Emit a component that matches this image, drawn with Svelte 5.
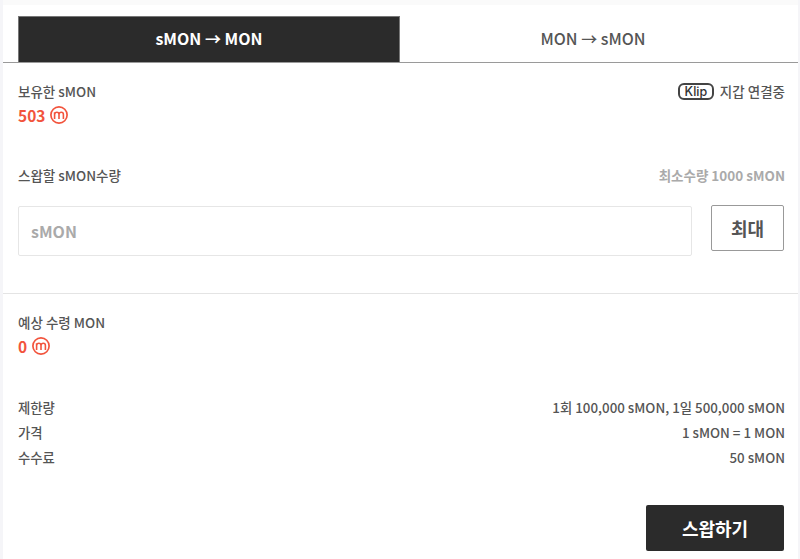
<script>
  const rows = [
    ['제한량', '1회 100,000 sMON, 1일 500,000 sMON'],
    ['가격', '1 sMON = 1 MON'],
    ['수수료', '50 sMON']
  ];
</script>

{#snippet coin()}
  <svg class="coin" width="18" height="18" viewBox="0 0 18 18" aria-hidden="true">
    <circle cx="9" cy="9" r="8.1" fill="none" stroke="#f2543d" stroke-width="1.7" />
    <path d="M4.6 13V6.2M4.6 8.2c.4-1.3 1.2-1.9 2.2-1.9S9 7 9 8.4V13M9 8.4c.2-1.4 1.2-2.1 2.3-2.1s2.1.8 2.1 2.2V13" fill="none" stroke="#f2543d" stroke-width="1.6" />
  </svg>
{/snippet}

<div class="panel">
  <div class="tabs">
    <button class="tab active">sMON → MON</button>
    <button class="tab">MON → sMON</button>
  </div>

  <section class="top">
    <div class="between">
      <div class="label">보유한 sMON</div>
      <div class="wallet">
        <span class="klip">Klip</span>
        <span>지갑 연결중</span>
      </div>
    </div>
    <div class="amount">503 {@render coin()}</div>

    <div class="between swap-row">
      <div class="label">스왑할 sMON수량</div>
      <div class="min">최소수량 1000 sMON</div>
    </div>

    <div class="input-row">
      <input class="input" placeholder="sMON" />
      <button class="max">최대</button>
    </div>
  </section>

  <section class="bottom">
    <div class="label">예상 수령 MON</div>
    <div class="amount">0 {@render coin()}</div>

    <div class="rows">
      {#each rows as [k, v]}
        <div class="between row"><span>{k}</span><span>{v}</span></div>
      {/each}
    </div>

    <div class="actions">
      <button class="submit">스왑하기</button>
    </div>
  </section>
</div>

<style>
  :global(body) {
    margin: 0;
    background: #f5f5f8;
    font-family: "Noto Sans CJK KR", "Noto Sans", sans-serif;
  }
  .panel {
    box-sizing: border-box;
    height: 559px;
    margin: 0 2px 0 3px;
    border-top: 5px solid #fafafa;
    padding-top: 11px;
    background: #fff;
    color: #555;
    overflow: hidden;
  }
  button, input { font-family: inherit; }
  .tabs {
    display: flex;
    padding: 0 12px 0 15px;
    height: 47px;
    box-sizing: border-box;
    border-bottom: 1px solid #9a9a9a;
  }
  .tab {
    flex: 1 1 0;
    border: 0;
    background: none;
    padding: 0 0 3px;
    font-size: 16px;
    font-weight: 500;
    color: #555;
    height: 46px;
  }
  .tab.active {
    flex: 0 0 382px;
    background: #2b2b2b;
    color: #fff;
    font-weight: 700;
    padding: 0 0 3px;
    border: 1px solid #777;
    border-bottom: 0;
    box-sizing: border-box;
  }
  .top {
    padding: 18px 13px 0 15px;
    height: 231px;
    box-sizing: border-box;
    border-bottom: 1px solid #e4e4e4;
  }
  .bottom { padding: 18px 13px 0 15px; }
  .between {
    display: flex;
    justify-content: space-between;
    align-items: center;
  }
  .label {
    font-size: 13.5px;
    line-height: 20px;
    font-weight: 500;
    color: #555;
  }
  .wallet {
    display: flex;
    align-items: center;
    gap: 6px;
    font-size: 13.5px;
    font-weight: 500;
    color: #555;
    line-height: 20px;
  }
  .klip {
    box-sizing: border-box;
    width: 36px;
    height: 17px;
    border: 2px solid #444;
    border-radius: 6px;
    font-family: Inter, "Liberation Sans", sans-serif;
    font-size: 12.5px;
    font-weight: 500;
    line-height: 13px;
    text-align: center;
    color: #333;
  }
  .amount {
    display: flex;
    align-items: center;
    gap: 5px;
    margin-top: 2px;
    font-size: 15.5px;
    line-height: 24px;
    font-weight: 700;
    color: #f2543d;
  }
  .swap-row { margin-top: 38px; }
  .min {
    font-size: 13.5px;
    line-height: 20px;
    font-weight: 700;
    color: #aaa;
  }
  .input-row {
    display: flex;
    justify-content: space-between;
    align-items: flex-start;
    margin-top: 21px;
  }
  .input {
    box-sizing: border-box;
    width: 674px;
    height: 50px;
    padding: 0 12px;
    border: 1px solid #e6e6e6;
    border-radius: 2px;
    font-size: 16px;
    font-weight: 700;
    outline: none;
  }
  .input::placeholder { color: #aaa; opacity: 1; }
  .max {
    box-sizing: border-box;
    width: 73px;
    height: 46px;
    background: #fff;
    border: 1px solid #999;
    border-radius: 2px;
    font-size: 18px;
    font-weight: 700;
    color: #555;
    margin: -1px 1px 0 0;
  }
  .rows { margin-top: 37px; }
  .row {
    font-size: 13.35px;
    line-height: 25px;
    font-weight: 500;
    color: #555;
  }
  .actions {
    display: flex;
    justify-content: flex-end;
    margin-top: 35px;
  }
  .submit {
    width: 138px;
    height: 46px;
    margin-right: 1px;
    background: #2b2b2b;
    color: #fff;
    border: 0;
    border-radius: 2px;
    font-size: 18px;
    font-weight: 700;
  }
</style>
